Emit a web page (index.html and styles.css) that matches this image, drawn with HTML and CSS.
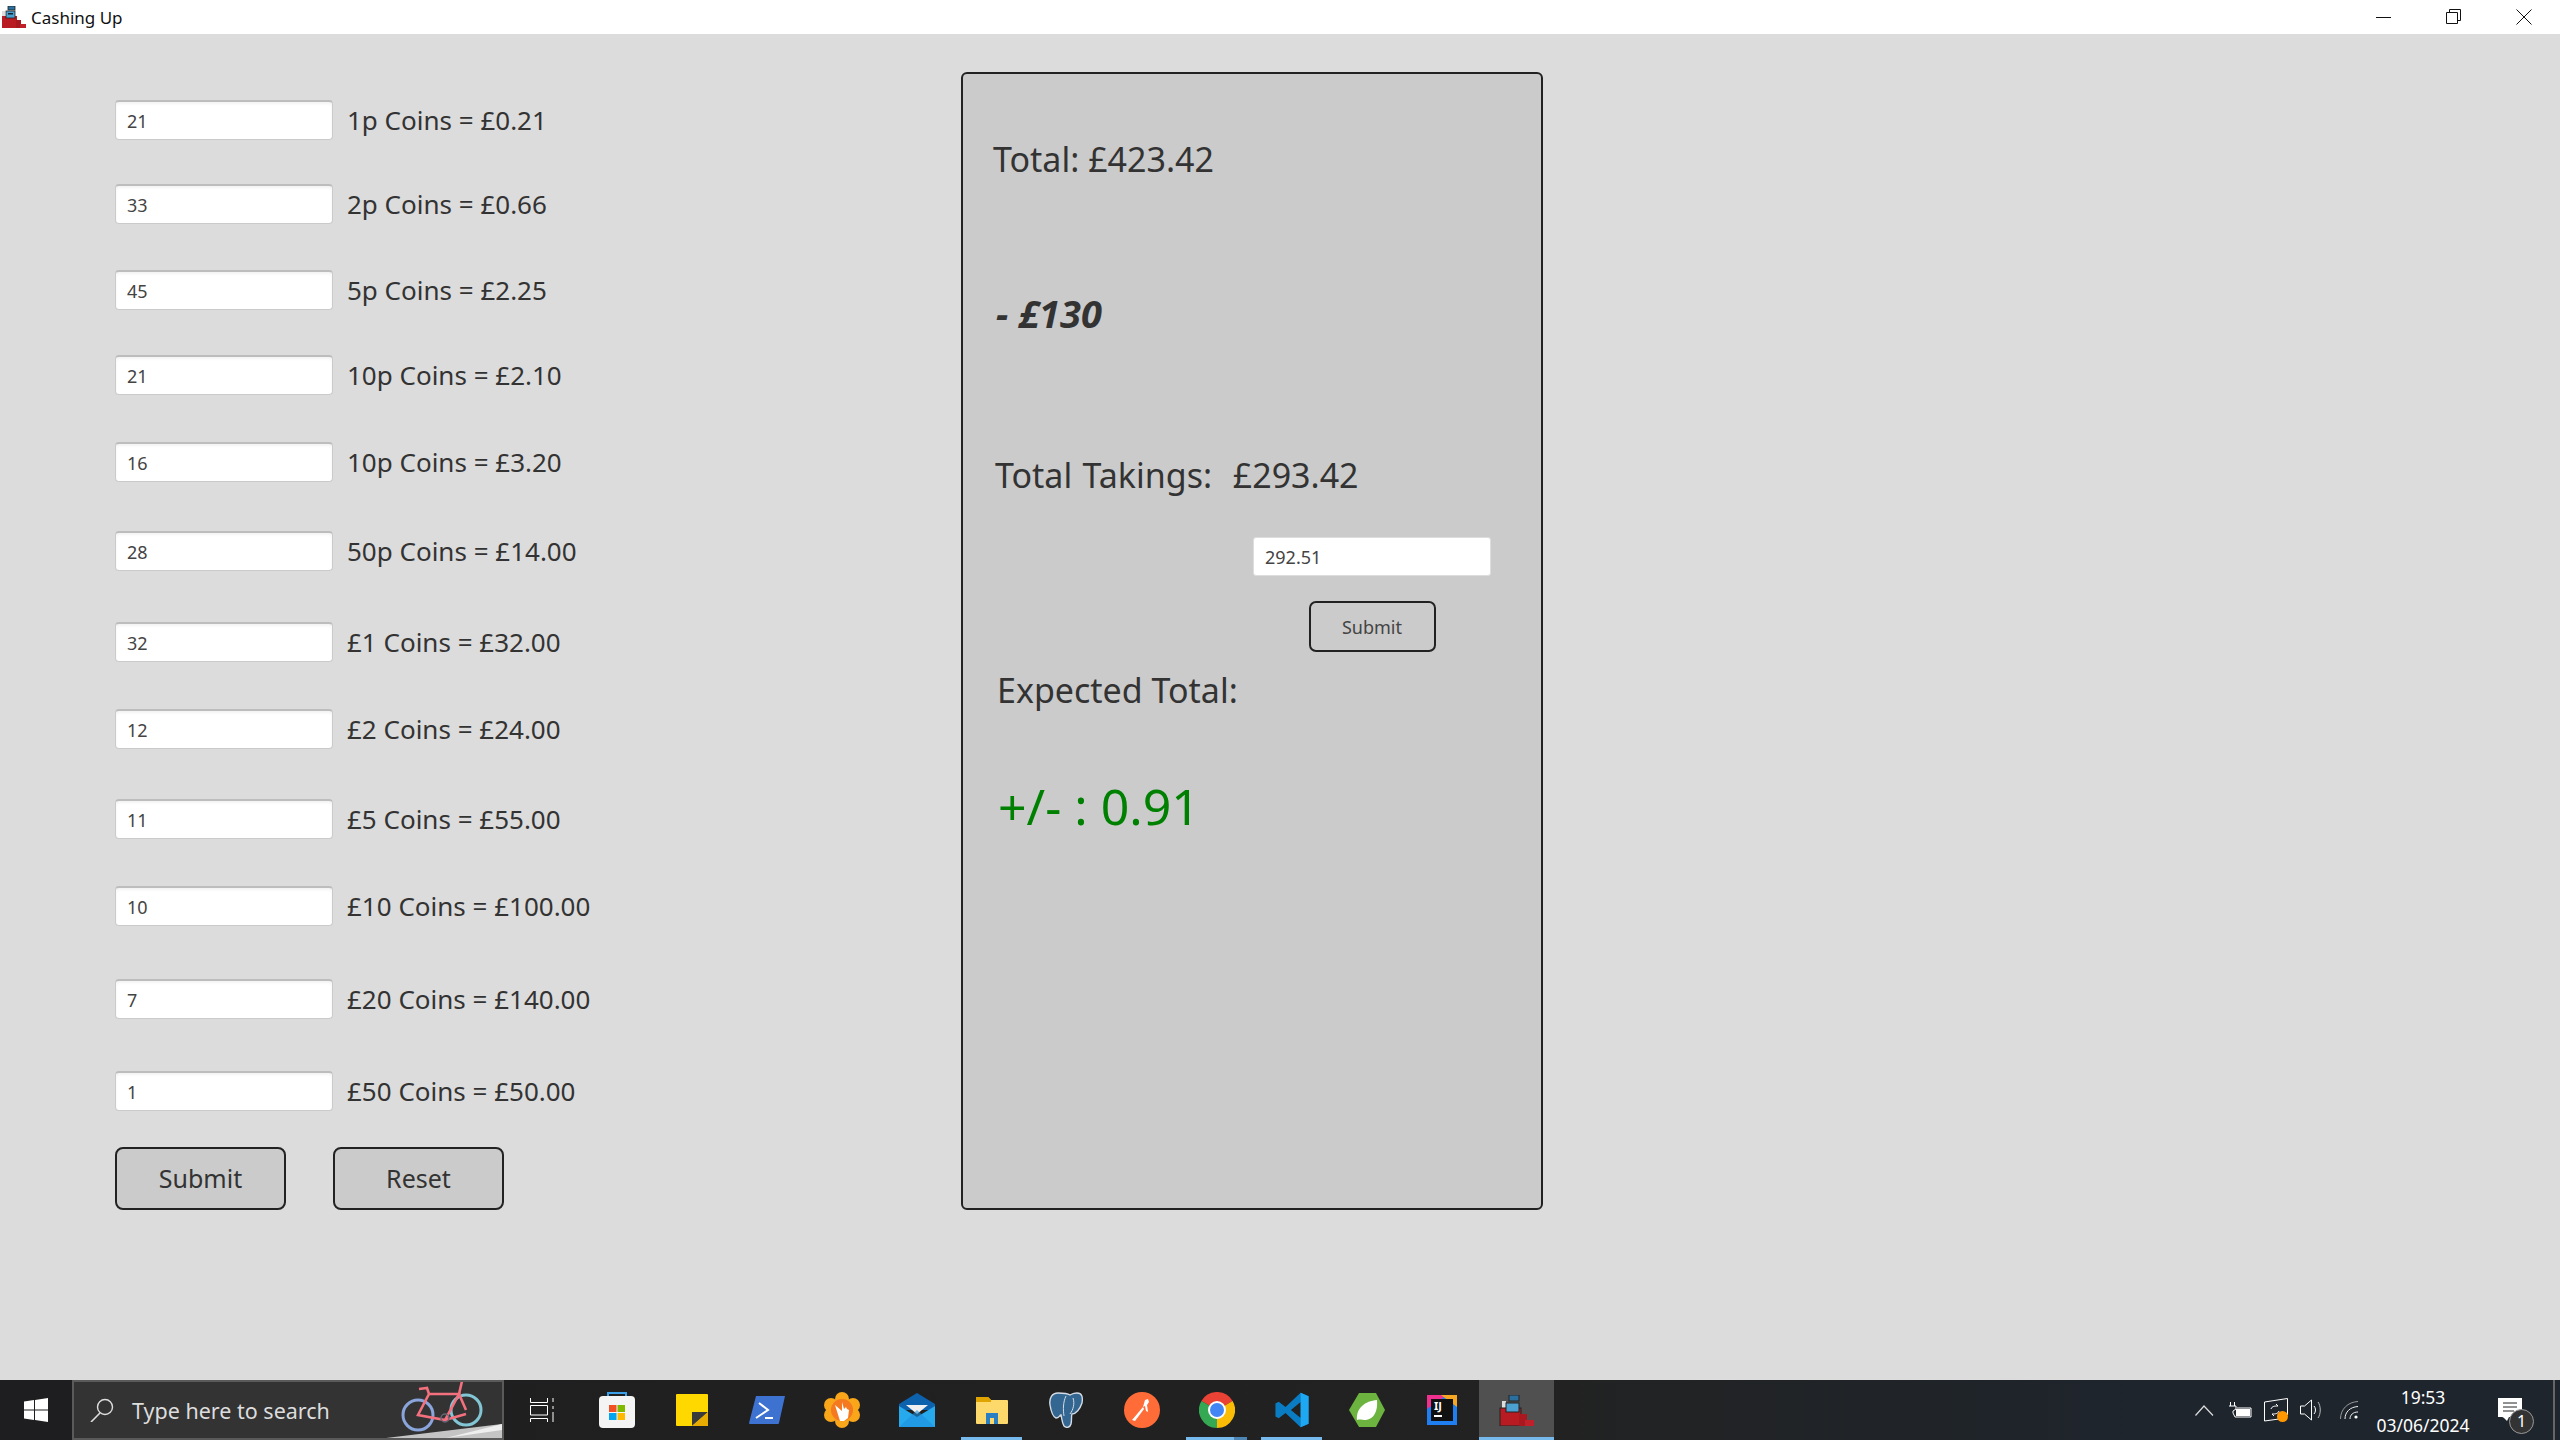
FILE: index.html
```html
<!DOCTYPE html>
<html lang="en">
<head>
    <meta charset="UTF-8">
    <title>Cashing Up</title>
    <link rel="stylesheet" href="styles.css">
</head>
<body>
    <header class="title-bar">
        <div class="title-left">
            <svg class="app-icon" viewBox="0 0 24 22" width="24" height="22">
                <rect x="0" y="5" width="3" height="5" fill="#ddd"/>
                <rect x="6" y="0" width="7" height="4" fill="#2a6f9e" stroke="#222" stroke-width=".8"/>
                <rect x="0" y="10" width="15" height="12" fill="#b81c22"/>
                <rect x="14" y="14" width="5" height="8" fill="#a8181e"/>
                <rect x="18" y="18" width="6" height="4" fill="#c0202a"/>
                <rect x="4" y="5" width="9" height="7" fill="#4aa0d0" stroke="#222" stroke-width=".8"/>
                <rect x="6" y="7" width="5" height="1.500" fill="#123"/>
            </svg>
            <span class="title-text">Cashing Up</span>
        </div>
        <div class="window-buttons">
            <svg viewBox="0 0 16 16" width="16" height="16"><path d="M0 8.500h15" stroke="#111" fill="none"/></svg>
            <svg viewBox="0 0 16 16" width="16" height="16"><path d="M.5 3.500h11v11H.5zM3.500 3.500V.5h11v11h-3" stroke="#111" fill="none"/></svg>
            <svg viewBox="0 0 16 16" width="16" height="16"><path d="M.5.5l15 15M15.500.5l-15 15" stroke="#111" fill="none"/></svg>
        </div>
    </header>

    <main class="app-body">
        <section class="coin-panel">
            <div class="coin-list">
                <div class="coin-row"><input class="coin-input" type="text" value="21"><span>1p Coins = £0.21</span></div>
                <div class="coin-row"><input class="coin-input" type="text" value="33"><span>2p Coins = £0.66</span></div>
                <div class="coin-row"><input class="coin-input" type="text" value="45"><span>5p Coins = £2.25</span></div>
                <div class="coin-row"><input class="coin-input" type="text" value="21"><span>10p Coins = £2.10</span></div>
                <div class="coin-row"><input class="coin-input" type="text" value="16"><span>10p Coins = £3.20</span></div>
                <div class="coin-row"><input class="coin-input" type="text" value="28"><span>50p Coins = £14.00</span></div>
                <div class="coin-row"><input class="coin-input" type="text" value="32"><span>£1 Coins = £32.00</span></div>
                <div class="coin-row"><input class="coin-input" type="text" value="12"><span>£2 Coins = £24.00</span></div>
                <div class="coin-row"><input class="coin-input" type="text" value="11"><span>£5 Coins = £55.00</span></div>
                <div class="coin-row"><input class="coin-input" type="text" value="10"><span>£10 Coins = £100.00</span></div>
                <div class="coin-row"><input class="coin-input" type="text" value="7"><span>£20 Coins = £140.00</span></div>
                <div class="coin-row"><input class="coin-input" type="text" value="1"><span>£50 Coins = £50.00</span></div>
            </div>
            <div class="coin-actions">
                <button class="big-button">Submit</button>
                <button class="big-button">Reset</button>
            </div>
        </section>

        <section class="summary-panel">
            <p class="summary-line total-line">Total: £423.42</p>
            <p class="summary-line float-line">- £130</p>
            <p class="summary-line takings-line">Total Takings:&nbsp; £293.42</p>
            <div class="expected-form">
                <input class="expected-input" type="text" value="292.51">
                <button class="small-button">Submit</button>
            </div>
            <p class="summary-line expected-line">Expected Total:</p>
            <p class="summary-line diff-line">+/- : 0.91</p>
        </section>
    </main>

    <footer class="taskbar">
        <div class="start-button">
            <svg viewBox="0 0 24 24" width="24" height="24"><path d="M0 3.500l10-1.400v9.400H0zM11 1.900L24 0v11.500H11zM0 12.500h10v9.400L0 20.500zM11 12.500h13V24l-13-1.900z" fill="#fff"/></svg>
        </div>
        <div class="search-box">
            <svg viewBox="0 0 24 24" width="24" height="24"><circle cx="15" cy="9" r="7.500" fill="none" stroke="#ddd" stroke-width="1.400"/><path d="M10 15L1 24" stroke="#ddd" stroke-width="1.600"/></svg>
            <span class="search-text">Type here to search</span>
            <svg class="search-art" viewBox="0 0 116 56" width="116" height="56">
                <path d="M0 56L116 42v14z" fill="#c4c4c4"/>
                <path d="M60 56L116 42v6z" fill="#eee"/>
                <circle cx="32" cy="33" r="15" fill="none" stroke="#8aa4dc" stroke-width="3"/>
                <circle cx="80" cy="28" r="15" fill="none" stroke="#82c6d6" stroke-width="3"/>
                <path d="M32 33l11-21h30l-14 26zM73 12l7 16M59 38l21-6M43 12l-2-6-8 1M73 12l4-17h-9" fill="none" stroke="#f4707e" stroke-width="2.600"/>
                <circle cx="59" cy="36" r="4" fill="none" stroke="#667" stroke-width="1.500"/>
            </svg>
        </div>
        <div class="task-icons">
            <span class="task-slot"><svg viewBox="0 0 24 24" width="24" height="24"><path d="M.5 0v4.500h17V0M.5 7.500h17v9.500H.5zM.5 24v-3.500h17V24M23 0v4M23 8v3M23 14v10" fill="none" stroke="#fff"/></svg></span>
            <span class="task-slot"><svg viewBox="0 0 36 36" width="36" height="36"><path d="M9 8V1h18v7" fill="none" stroke="#3ba0e8" stroke-width="2"/><rect y="4" width="36" height="32" rx="4" fill="#f4f4f4"/><rect x="10" y="13" width="7.500" height="7" fill="#f25022"/><rect x="18.500" y="13" width="7.500" height="7" fill="#7fba00"/><rect x="10" y="21" width="7.500" height="7" fill="#00a4ef"/><rect x="18.500" y="21" width="7.500" height="7" fill="#ffb900"/></svg></span>
            <span class="task-slot"><svg viewBox="0 0 32 32" width="32" height="32"><rect width="32" height="32" rx="1" fill="#ffd800"/><path d="M16 32V18h16z" fill="#3a3a3a"/><path d="M32 18v14H16z" fill="#e8ab00"/></svg></span>
            <span class="task-slot"><svg viewBox="0 0 36 28" width="36" height="28"><path d="M7 0h29l-6 27a1 1 0 0 1-1 1H1a1 1 0 0 1-1-1z" fill="#3d72d0"/><path d="M10 7l9 7-12 8M16 22h8" fill="none" stroke="#fff" stroke-width="2"/></svg></span>
            <span class="task-slot"><svg viewBox="0 0 36 36" width="36" height="36"><g fill="#f9a61a"><circle cx="18" cy="7" r="7"/><circle cx="18" cy="29" r="7"/><circle cx="7" cy="13" r="7"/><circle cx="29" cy="13" r="7"/><circle cx="7" cy="23" r="7"/><circle cx="29" cy="23" r="7"/></g><circle cx="18" cy="18" r="11" fill="#f4791f"/><path d="M11 13l7 6V10l2 7 2-2 1 2 2 1-1 8-4 3h-4z" fill="#fff"/></svg></span>
            <span class="task-slot"><svg viewBox="0 0 36 34" width="36" height="34"><path d="M0 11L18 0l18 11v6H0z" fill="#0d62ad"/><path d="M7 12h22l-11 9z" fill="#f0f0f0"/><path d="M0 13l18 11 18-11v21H0z" fill="#27a9ee"/><path d="M0 34l18-17 18 17z" fill="#1e8fdd" opacity=".6"/></svg></span>
            <span class="task-slot running"><svg viewBox="0 0 32 27" width="32" height="27"><path d="M0 1a1 1 0 0 1 1-1h11l3 3h16a1 1 0 0 1 1 1v22a1 1 0 0 1-1 1H1a1 1 0 0 1-1-1z" fill="#fdd86a"/><path d="M0 1a1 1 0 0 1 1-1h11l3 3v2H0z" fill="#e0a400"/><path d="M10 27V16h12v11h-4v-6h-4v6z" fill="#2a7fc4"/></svg></span>
            <span class="task-slot"><svg viewBox="0 0 35 36" width="35" height="36"><path d="M9 1C3 1 0 6 1 13c1 6 3 12 6 13 3 0 3-2 5-3 1 4 1 8 3 11 2 2 6 2 7-2 1-4 0-8 1-10 4 0 8-5 10-11 1-6 0-10-5-10-4 0-5 1-7 2-3-2-7-2-12-2z" fill="#336791" stroke="#d4dbe4" stroke-width="1.400"/><path d="M17 4c-3 6-3 14-2 20M24 6c2 6 0 12-3 16" fill="none" stroke="#d4dbe4"/></svg></span>
            <span class="task-slot"><svg viewBox="0 0 36 36" width="36" height="36"><circle cx="18" cy="18" r="18" fill="#ff6c37"/><path d="M8 28l11-13 1 2-9 12zM19 15l2-7 3-1 1 3-2 3 1 7-2-1-1-5z" fill="#fff"/></svg></span>
            <span class="task-slot running split"><svg viewBox="0 0 36 36" width="36" height="36"><path d="M2.400 9A18 18 0 0 1 33.600 9L18 18z" fill="#ea4335"/><path d="M2.400 9A18 18 0 0 0 18 36V18z" fill="#34a853"/><path d="M33.600 9A18 18 0 0 1 18 36V18z" fill="#fbbc05"/><circle cx="18" cy="18" r="9" fill="#fff"/><circle cx="18" cy="18" r="7" fill="#4285f4"/></svg></span>
            <span class="task-slot running"><svg viewBox="0 0 100 100" width="36" height="36"><path d="M74 2L32 42 13 27l-9 5v36l9 5 19-15 42 40 22-10V12zM74 28L47 50l27 22z" fill="#0a7cc4" fill-rule="evenodd"/><path d="M74 2l22 10v76L74 98z" fill="#1fa8f2"/></svg></span>
            <span class="task-slot"><svg viewBox="0 0 36 34" width="36" height="34"><path d="M10 0h17l9 17-9 17H10L0 17z" fill="#6cb33f"/><path d="M8 27C7 15 16 8 28 7c1 11-3 19-11 20-4 0-6-1-9 0z" fill="#fff"/></svg></span>
            <span class="task-slot"><svg viewBox="0 0 30 30" width="30" height="30"><rect width="30" height="30" fill="#1f7ff0"/><path d="M0 0h20L0 14z" fill="#f0308f"/><path d="M14 0h16v12z" fill="#f5a623"/><rect x="4" y="4" width="22" height="22" fill="#111"/><text x="7" y="15" class="ij-text">IJ</text><rect x="7" y="20" width="8" height="2" fill="#fff"/></svg></span>
            <span class="task-slot active"><svg viewBox="0 0 35 31" width="35" height="31"><rect x="3" y="6" width="4" height="7" fill="#ddd"/><rect x="10" y="0" width="10" height="6" fill="#2a6f9e" stroke="#222"/><rect x="1" y="13" width="21" height="18" fill="#b81c22" stroke="#222"/><rect x="20" y="19" width="8" height="12" fill="#a8181e"/><rect x="26" y="25" width="9" height="6" fill="#c0202a"/><rect x="7" y="8" width="13" height="9" fill="#4aa0d0" stroke="#222"/></svg></span>
        </div>
        <div class="tray">
            <svg viewBox="0 0 21 12" width="21" height="12"><path d="M.5 11.500L9 2l9 9.500" fill="none" stroke="#ddd" stroke-width="1.200"/></svg>
            <svg viewBox="0 0 24 16" width="24" height="16"><path d="M2.500 0v4M6.500 0v4M1 4h7v3L5 9v2l2 4h16V6H9" fill="none" stroke="#fff"/><rect x="8" y="7" width="14" height="7" fill="#fff"/></svg>
            <svg viewBox="0 0 24 24" width="24" height="24"><path d="M.5 4L23.500.5V17M.5 4v19L15 21" fill="none" stroke="#fff"/><path d="M7 11c1-3 4-3 7-3l-2-2M15 13c-1 3-4 3-7 3l2 2" fill="none" stroke="#fff"/><circle cx="18.500" cy="18.500" r="5.500" fill="#ff9800"/></svg>
            <svg viewBox="0 0 28 22" width="28" height="22"><path d="M.5 7h4l7-6v20l-7-6h-4zM14 7c2 2 2 6 0 8" fill="none" stroke="#fff"/><path d="M18 3c3 4 3 12 0 16" fill="none" stroke="#bbb"/></svg>
            <svg viewBox="0 0 18 18" width="18" height="18"><path d="M.5 18C.5 8 8 1 18 .5" fill="none" stroke="#999"/><path d="M5 18C5 11 10 6 18 5.500" fill="none" stroke="#eee"/><path d="M10 18c0-4 3-7 8-7" fill="none" stroke="#eee"/><circle cx="16" cy="16" r="1.600" fill="#fff"/></svg>
            <div class="clock"><span>19:53</span><span>03/06/2024</span></div>
            <div class="notify">
                <svg viewBox="0 0 24 26" width="24" height="26"><path d="M0 0h24v19H10l-2 1-4-1H0z" fill="#fff"/><path d="M5 5h14M5 9h14M5 13h11" stroke="#222"/><path d="M5 19h6l-2 4z" fill="#fff"/></svg>
                <span class="notify-badge">1</span>
            </div>
        </div>
    </footer>
</body>
</html>
```

FILE: styles.css
```css
* {
    box-sizing: border-box;
}
html, body {
    height: 100%;
}
body {
    margin: 0;
    display: flex;
    flex-direction: column;
    font-family: "Noto Sans", "Open Sans", sans-serif;
    color: #333;
    background-color: #dcdcdc;
    overflow: hidden;
}
p {
    margin: 0;
}
.title-bar {
    height: 34px;
    background-color: white;
    display: flex;
    justify-content: space-between;
    align-items: center;
    flex-shrink: 0;
}
.title-left {
    display: flex;
    align-items: center;
    gap: 5px;
    padding-left: 2px;
}
.title-text {
    font-size: 17px;
    color: #111;
}
.window-buttons {
    display: flex;
    gap: 54px;
    padding-right: 28px;
}
.app-body {
    flex: 1;
    display: flex;
    align-items: flex-start;
    padding: 38px 0 0 115px;
    min-height: 0;
}
.coin-panel {
    width: 846px;
    padding-top: 28px;
}
.coin-list {
    display: grid;
    grid-template-rows: 84px 86px 85px 87px 89px 91px 87px 90px 87px 93px 92px 76px;
}
.coin-row {
    display: flex;
    align-items: flex-start;
    gap: 14px;
    font-size: 26px;
    line-height: 41px;
}
.coin-input {
    width: 218px;
    height: 40px;
    padding: 0 11px;
    font: 18px "Noto Sans", sans-serif;
    color: #444;
    background-color: white;
    border: 1px solid #cacaca;
    border-top: 2px solid #bdbdbd;
    border-radius: 4px;
    box-shadow: inset 0 2px 3px rgba(0, 0, 0, 0.05);
}
.coin-actions {
    display: flex;
    gap: 47px;
}
.big-button {
    width: 171px;
    height: 63px;
    padding-bottom: 3px;
    font: 25px "Noto Sans", sans-serif;
    color: #333;
    background-color: #cbcbcb;
    border: 2px solid #222;
    border-radius: 8px;
}
.summary-panel {
    width: 582px;
    height: 1138px;
    padding: 0 30px;
    background-color: #cbcbcb;
    border: 2px solid #222;
    border-radius: 6px;
}
.summary-line {
    font-size: 34px;
    line-height: 48px;
}
.total-line {
    margin-top: 61px;
}
.float-line {
    margin: 106px 0 0 3px;
    font-size: 38px;
    font-weight: bold;
    font-style: italic;
}
.takings-line {
    margin: 114px 0 0 2px;
    word-spacing: 1.5px;
}
.expected-form {
    display: flex;
    flex-direction: column;
    align-items: center;
    gap: 25px;
    width: 238px;
    margin: 38px 0 0 260px;
}
.expected-input {
    width: 238px;
    height: 39px;
    padding: 0 11px;
    font: 18px "Noto Sans", sans-serif;
    color: #444;
    background-color: white;
    border: 1px solid #ddd;
    border-radius: 3px;
}
.small-button {
    width: 127px;
    height: 51px;
    font: 18px "Noto Sans", sans-serif;
    color: #444;
    background-color: #cbcbcb;
    border: 2px solid #222;
    border-radius: 7px;
}
.expected-line {
    margin: 14px 0 0 4px;
}
.diff-line {
    margin: 60px 0 0 5px;
    font-size: 50px;
    line-height: 64px;
    color: green;
}
.taskbar {
    height: 60px;
    flex-shrink: 0;
    display: flex;
    align-items: stretch;
    background: linear-gradient(90deg, #1e1e20 0%, #222 60%, #1e252d 85%);
    color: white;
}
.start-button {
    width: 72px;
    display: flex;
    align-items: center;
    justify-content: center;
}
.search-box {
    width: 432px;
    display: flex;
    align-items: center;
    gap: 18px;
    padding-left: 16px;
    background-color: #333;
    border: 2px solid #5a5a5a;
    position: relative;
    overflow: hidden;
}
.search-text {
    font-size: 21.5px;
    color: #ddd;
}
.search-art {
    position: absolute;
    right: 0;
    bottom: 0;
}
.task-icons {
    display: flex;
    flex: 1;
}
.task-slot {
    width: 75px;
    display: flex;
    align-items: center;
    justify-content: center;
    position: relative;
}
.task-slot.running::after,
.task-slot.active::after {
    content: "";
    position: absolute;
    left: 7px;
    right: 7px;
    bottom: 0;
    height: 3px;
    background-color: #76b9ed;
}
.task-slot.split::before {
    content: "";
    position: absolute;
    z-index: 1;
    right: 7px;
    bottom: 0;
    width: 13px;
    height: 3px;
    background-color: #4d86b5;
}
.task-slot.active {
    background-color: #505050;
}
.task-slot.active::after {
    left: 0;
    right: 0;
}
.ij-text {
    font: bold 11px "Noto Sans", sans-serif;
    fill: white;
}
.tray {
    display: flex;
    align-items: center;
    gap: 12px;
    padding-right: 5px;
}
.clock {
    width: 106px;
    display: flex;
    flex-direction: column;
    align-items: center;
    padding-top: 2px;
    font-size: 17.5px;
    line-height: 28px;
}
.notify {
    position: relative;
    width: 67px;
    height: 60px;
    padding: 18px 0 0 10px;
    border-right: 2px solid #666;
}
.notify-badge {
    position: absolute;
    left: 21px;
    top: 29px;
    width: 25px;
    height: 25px;
    border-radius: 50%;
    border: 1px solid #999;
    background-color: #333;
    text-align: center;
    font-size: 16px;
    line-height: 23px;
}
```
